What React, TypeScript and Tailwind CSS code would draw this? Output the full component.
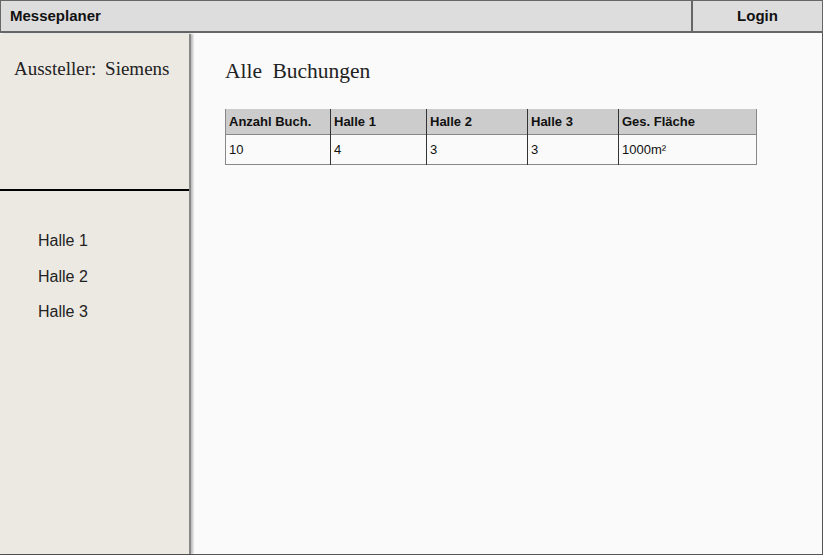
import React from 'react';

const HALLS = ['Halle 1', 'Halle 2', 'Halle 3'];

const COLUMNS = [
	{ label: 'Anzahl Buch.', value: '10', width: 'w-[105px]' },
	{ label: 'Halle 1', value: '4', width: 'w-[96px]' },
	{ label: 'Halle 2', value: '3', width: 'w-[101px]' },
	{ label: 'Halle 3', value: '3', width: 'w-[91px]' },
	{ label: 'Ges. Fläche', value: '1000m²', width: 'w-[138px]' },
];

export default function App() {
	return (
		<div className="w-[823px] h-[555px] flex flex-col bg-[#fafafa] font-['Liberation_Sans',Arial,sans-serif] text-[#111] overflow-hidden">
			{/* Top bar */}
			<div className="h-[33px] flex bg-[#dddddd] border-t border-l border-r border-b-2 border-[#666]">
				<div className="flex-1 flex items-center pl-[9px] text-[15px] font-bold">Messeplaner</div>
				<div className="w-[131px] flex items-center justify-center border-l-2 border-[#666] text-[15px] font-bold">
					Login
				</div>
			</div>

			<div className="flex-1 flex min-h-0 border-r border-b border-[#555]">
				{/* Sidebar */}
				<div className="w-[191px] flex flex-col bg-[#ece9e3] border-r-2 border-[#888] shadow-[2px_0_2px_rgba(0,0,0,0.25)] mt-[1px]">
					<div className="h-[157px] border-b-2 border-black pl-[14px] pt-[21px] font-['Liberation_Serif',serif] text-[19px] [word-spacing:4px] text-[#222]">
						Aussteller: Siemens
					</div>
					<div className="flex flex-col pl-[38px] pt-[40px] gap-[15.5px] text-[16px] text-[#222]">
						{HALLS.map(h => (
							<div key={h} className="leading-[20px]">{h}</div>
						))}
					</div>
				</div>

				{/* Main */}
				<div className="flex-1 pl-[34px] pt-[25px]">
					<h1 className="font-['Liberation_Serif',serif] text-[21.5px] [word-spacing:5px] text-[#222] leading-[26px]">
						Alle Buchungen
					</h1>
					<div className="mt-[25px] flex border-l border-[#888] w-fit">
						{COLUMNS.map((c, i) => (
							<div
								key={c.label}
								className={`${c.width} flex flex-col ${i < COLUMNS.length - 1 ? 'border-r border-[#333]' : 'border-r border-[#888]'}`}
							>
								<div className="h-[26px] bg-[#cccccc] border-b border-[#888] flex items-center pl-[3px] text-[13px] font-bold">
									{c.label}
								</div>
								<div className="h-[30px] border-b border-[#888] flex items-center pl-[3px] text-[13px]">
									{c.value}
								</div>
							</div>
						))}
					</div>
				</div>
			</div>
		</div>
	);
}
